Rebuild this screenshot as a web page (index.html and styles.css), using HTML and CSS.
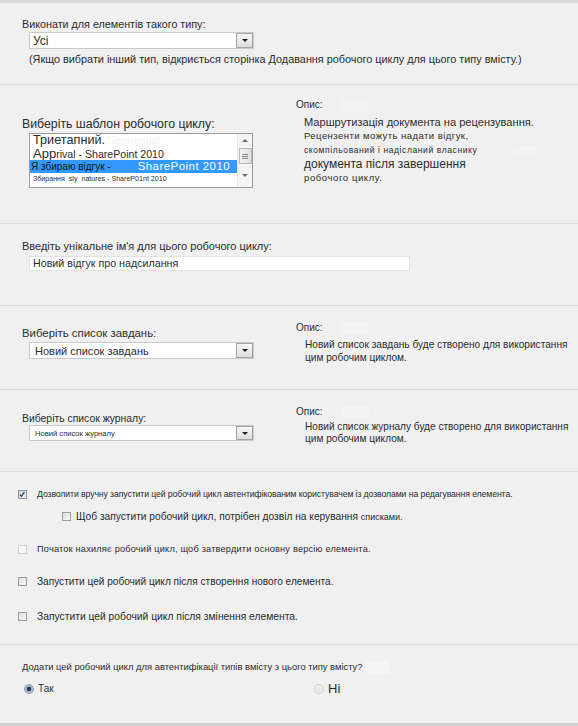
FILE: index.html
```html
<!DOCTYPE html>
<html lang="uk">
<head>
<meta charset="utf-8">
<title>Додавання робочого циклу</title>
<link rel="stylesheet" href="styles.css">
</head>
<body>
<div class="page">
  <section class="sec s1">
    <div class="lbl l1">Виконати для елементів такого типу:</div>
    <div class="select sel1"><span class="val v1">Усі</span><span class="btn"><i></i></span></div>
    <div class="note">(Якщо вибрати інший тип, відкриється сторінка Додавання робочого циклу для цього типу вмісту.)</div>
  </section>

  <section class="sec s2 two">
    <div class="col-left">
      <div class="lbl l2">Виберіть шаблон робочого циклу:</div>
      <div class="listbox">
        <div class="items">
          <div class="it it1">Триетапний.<span class="ghost-txt">Sequential</span></div>
          <div class="it it2"><span class="app">App</span>rival - SharePoint 2010</div>
          <div class="it it3"><span class="a">Я збираю відгук -</span><span class="b">SharePoint 2010</span></div>
          <div class="it it4">Збирання &nbsp;sly&nbsp; natures - ShareP01nt 2010</div>
        </div>
        <div class="sb">
          <span class="up"></span>
          <span class="thumb"><i></i><i></i><i></i></span>
          <span class="down"></span>
        </div>
      </div>
    </div>
    <div class="col-right">
      <div class="dt">Опис:<span class="ghost"></span></div>
      <div class="desc d2">
        <div class="ln d2a">Маршрутизація документа на рецензування.</div>
        <div class="ln d2b">Рецензенти можуть надати відгук,</div>
        <div class="ln d2c">скомпільований і надісланий власнику<span class="ghost g2"></span></div>
        <div class="ln d2d">документа після завершення</div>
        <div class="ln d2e">робочого циклу.</div>
      </div>
    </div>
  </section>

  <section class="sec s3">
    <div class="lbl l3">Введіть унікальне ім'я для цього робочого циклу:</div>
    <div class="input">Новий відгук про надсилання</div>
  </section>

  <section class="sec s4 two">
    <div class="col-left">
      <div class="lbl l4">Виберіть список завдань:</div>
      <div class="select sel4"><span class="val v4">Новий список завдань</span><span class="btn"><i></i></span></div>
    </div>
    <div class="col-right">
      <div class="dt">Опис:<span class="ghost"></span></div>
      <div class="desc d4">
        <div class="ln">Новий список завдань буде створено для використання</div>
        <div class="ln">цим робочим циклом.</div>
      </div>
    </div>
  </section>

  <section class="sec s5 two">
    <div class="col-left">
      <div class="lbl l5">Виберіть список журналу:</div>
      <div class="select sel5"><span class="val v5">Новий список журналу</span><span class="btn"><i></i></span></div>
    </div>
    <div class="col-right">
      <div class="dt">Опис:<span class="ghost"></span></div>
      <div class="desc d5">
        <div class="ln">Новий список журналу буде створено для використання</div>
        <div class="ln">цим робочим циклом.</div>
      </div>
    </div>
  </section>

  <section class="sec s6">
    <div class="row r1">
      <span class="cb checked"><svg viewBox="0 0 9 9" width="9" height="9"><path d="M2 4.6 L3.8 6.6 L7.2 1.8" fill="none" stroke="#2b3a55" stroke-width="1.4"/></svg></span>
      <span class="rt t1">Дозволити вручну запустити цей робочий цикл автентифікованим користувачем із дозволами на редагування елемента.</span>
    </div>
    <div class="row r2">
      <span class="cb"></span>
      <span class="rt t2">Щоб запустити робочий цикл, потрібен дозвіл на керування <span class="sm">списками.</span></span>
    </div>
    <div class="row r3">
      <span class="cb light"></span>
      <span class="rt t3">Початок нахиляє робочий цикл, щоб затвердити основну версію елемента.</span>
    </div>
    <div class="row r4">
      <span class="cb"></span>
      <span class="rt t4">Запустити цей робочий цикл після створення нового елемента.</span>
    </div>
    <div class="row r5">
      <span class="cb"></span>
      <span class="rt t5">Запустити цей робочий цикл після змінення елемента.</span>
    </div>
  </section>

  <section class="sec s7">
    <div class="q">Додати цей робочий цикл для автентифікації типів вмісту з цього типу вмісту?<span class="ghost gq"></span></div>
    <div class="radios">
      <div class="radio-item yes"><span class="rb on"></span><span class="rl">Так</span></div>
      <div class="radio-item no"><span class="rb off"></span><span class="rl big">Ні</span></div>
    </div>
  </section>
</div>
</body>
</html>
```

FILE: styles.css
```css
* { box-sizing: border-box; }
html, body { margin: 0; padding: 0; }
body {
  background: #f0f0f0;
  font-family: "Liberation Sans", Arial, sans-serif;
  color: #2c2c2c;
}
.page {
  width: 578px;
  height: 726px;
  border-top: 3px solid #d9d9d9;
  border-bottom: 3px solid #d2d2d2;
  overflow: hidden;
}
.sec {
  border-top: 1px solid #dcdcdc;
  padding-left: 22px;
}
.two {
  display: grid;
  grid-template-columns: 274px 1fr;
  align-items: start;
}

/* labels */
.lbl { white-space: nowrap; line-height: 14px; }
.l1 { font-size: 10.75px; }
.l2 { font-size: 12.3px; }
.l3 { font-size: 11px; }
.l4 { font-size: 11.4px; }
.l5 { font-size: 10.4px; line-height: 12px; }

/* section 1 */
.s1 { border-top: 0; height: 81px; padding-top: 14px; }
.select {
  position: relative;
  width: 225px;
  margin-left: 7px;
  background: #fff;
  border: 1px solid #c9c9c9;
  display: flex;
  align-items: center;
}
.sel1 { height: 17px; margin-top: 1px; }
.val { padding-left: 3px; white-space: nowrap; }
.v1 { font-size: 12px; }
.btn {
  position: absolute;
  right: 0;
  top: 0;
  bottom: 0;
  width: 17px;
  border: 1px solid #a3a3a3;
  background: linear-gradient(#f6f6f6, #dedede);
  display: flex;
  align-items: center;
  justify-content: center;
}
.btn i {
  width: 0; height: 0;
  border-left: 3px solid transparent;
  border-right: 3px solid transparent;
  border-top: 3px solid #1c1c1c;
}
.note {
  margin-top: 3px;
  margin-left: 7px;
  font-size: 10.85px;
  line-height: 14px;
  white-space: nowrap;
}

/* section 2 */
.s2 { height: 139px; }
.s2 .col-left { padding-top: 32px; }
.s2 .col-right { padding-top: 13px; }
.dt {
  font-size: 10px;
  line-height: 14px;
  display: flex;
  align-items: center;
}
.ghost {
  display: inline-block;
  width: 28px;
  height: 12px;
  margin-left: 18px;
  background: #f3f3f3;
}
.desc { padding-left: 8px; white-space: nowrap; }
.d2 { margin-top: 3px; }
.d2 .ln { line-height: 14px; height: 14px; }
.d2a { font-size: 11.1px; }
.d2b { font-size: 9.5px; letter-spacing: 0.45px; }
.d2c { font-size: 8.5px; letter-spacing: 0.6px; }
.g2 { width: 24px; height: 10px; margin-left: 36px; vertical-align: middle; }
.d2d { font-size: 12px; }
.d2e { font-size: 9.5px; letter-spacing: 0.6px; }

.listbox {
  margin-top: 2px;
  margin-left: 7px;
  width: 224px;
  height: 55px;
  background: #fff;
  border: 1px solid #9a9a9a;
  display: flex;
}
.items { flex: 1; padding-top: 0; min-width: 0; }
.it { white-space: nowrap; padding-left: 3px; position: relative; }
.it1 { height: 12px; line-height: 12px; font-size: 12.7px; }
.ghost-txt {
  position: absolute;
  left: 78px;
  top: 0;
  font-size: 11px;
  color: #f4f4f4;
}
.it2 { height: 13px; line-height: 13px; font-size: 10.6px; margin-top: 1px; }
.app { font-size: 13px; }
.it3 {
  height: 13px;
  line-height: 13px;
  background: #3399ff;
  padding-left: 1px;
  display: flex;
  align-items: center;
}
.it3 .a { font-size: 10px; color: #111; }
.it3 .b { font-size: 11.4px; color: #fff; letter-spacing: 0.5px; margin-left: 27px; }
.it4 { height: 12px; line-height: 12px; font-size: 7.1px; }
.sb {
  width: 15px;
  border-left: 1px solid #e6e6e6;
  background: #f4f4f4;
  display: flex;
  flex-direction: column;
  align-items: center;
}
.sb .up, .sb .down {
  width: 0; height: 0;
  border-left: 3px solid transparent;
  border-right: 3px solid transparent;
  margin-top: 5px;
}
.sb .up { border-bottom: 3px solid #6a6a6a; }
.sb .down { border-top: 3px solid #6a6a6a; margin-top: 10px; }
.sb .thumb {
  margin-top: 6px;
  width: 13px;
  height: 16px;
  border: 1px solid #b9b9b9;
  background: linear-gradient(90deg, #f3f3f3, #e2e2e2);
  display: flex;
  flex-direction: column;
  align-items: center;
  justify-content: center;
  gap: 1px;
}
.sb .thumb i { display: block; width: 6px; height: 1px; background: #8a8a8a; }

/* section 3 */
.s3 { height: 82px; padding-top: 15px; }
.input {
  margin-top: 3px;
  margin-left: 7px;
  width: 381px;
  height: 15px;
  background: #fff;
  border: 1px solid #e2e2e2;
  font-size: 10.7px;
  line-height: 13px;
  padding-left: 3px;
  white-space: nowrap;
}

/* section 4 */
.s4 { height: 84px; }
.s4 .col-left { padding-top: 20px; }
.s4 .col-right { padding-top: 15px; }
.sel4 { height: 17px; margin-top: 2px; }
.v4 { font-size: 11px; padding-left: 5px; }
.d4, .d5 { padding-left: 9px; }
.d4 { margin-top: 3px; }
.d4 .ln { font-size: 10.15px; line-height: 13px; }

/* section 5 */
.s5 { height: 82px; }
.s5 .col-left { padding-top: 23px; }
.s5 .col-right { padding-top: 15px; }
.sel5 { height: 16px; }
.v5 { font-size: 7.6px; padding-left: 5px; }
.d5 { margin-top: 2px; }
.d5 .ln { font-size: 10.1px; line-height: 12px; }

/* section 6 */
.s6 { height: 173px; padding-top: 15px; padding-left: 18px; }
.row { display: flex; align-items: center; height: 14px; white-space: nowrap; }
.r2 { margin-top: 8px; padding-left: 44px; }
.r3 { margin-top: 19px; }
.r4 { margin-top: 18px; }
.r5 { margin-top: 21px; }
.cb {
  width: 9px;
  height: 9px;
  border: 1px solid #9c9c9c;
  background: linear-gradient(135deg, #dcdcdc, #f8f8f8);
  flex: none;
  display: flex;
}
.cb.checked { background: linear-gradient(135deg, #c9d3df, #eef2f6); border-color: #8e97a3; }
.cb.checked svg { margin: -1px 0 0 -1px; }
.cb.light { border-color: #d0d0d0; background: #f9f9f9; }
.rt { margin-left: 10px; color: #2a2a2a; }
.t1 { font-size: 8.7px; letter-spacing: -0.1px; }
.t2 { font-size: 10.2px; margin-left: 5px; }
.t2 .sm { font-size: 9px; }
.t3 { font-size: 9.2px; letter-spacing: 0.2px; }
.t4 { font-size: 10.1px; }
.t5 { font-size: 10.3px; }

/* section 7 */
.s7 { height: 79px; padding-top: 15px; }
.q {
  font-size: 9.4px;
  line-height: 14px;
  white-space: nowrap;
  display: flex;
  align-items: center;
}
.gq { width: 24px; height: 13px; margin-left: 3px; background: #f5f5f5; }
.radios {
  margin-top: 7px;
  display: grid;
  grid-template-columns: 292px 1fr;
  height: 14px;
}
.radio-item { display: flex; align-items: center; }
.radio-item.yes { padding-left: 2px; }
.rb {
  width: 10px;
  height: 10px;
  border-radius: 50%;
  flex: none;
}
.rb.on {
  border: 1px solid #8b9bb0;
  background: radial-gradient(circle, #2c3a55 0 2px, #9fb2c9 2.6px, #dfe6ee 100%);
}
.rb.off {
  border: 1px solid #cfcfcf;
  background: radial-gradient(circle, #e4e4e4, #f6f6f6);
}
.rl { margin-left: 4px; font-size: 10px; }
.rl.big { font-size: 13px; margin-left: 4px; }
```
